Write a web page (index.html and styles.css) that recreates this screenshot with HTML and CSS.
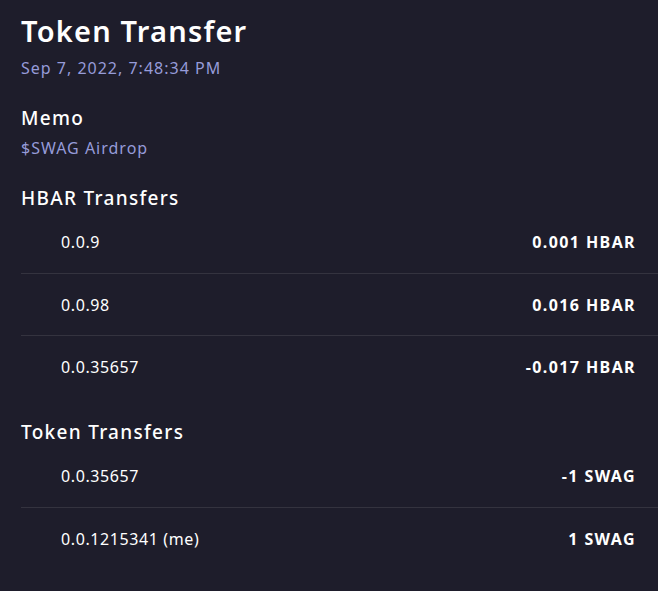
FILE: index.html
```html
<!DOCTYPE html>
<html>
<head>
<meta charset="utf-8">
<link rel="stylesheet" href="styles.css">
</head>
<body>
<main class="page">
  <header class="head">
    <h1 class="title">Token Transfer</h1>
    <div class="sub date">Sep 7, 2022, 7:48:34 PM</div>
  </header>
  <section class="memo">
    <h2 class="label">Memo</h2>
    <div class="sub">$SWAG Airdrop</div>
  </section>
  <section class="group">
    <h2 class="label">HBAR Transfers</h2>
    <ul class="rows">
      <li class="row"><span class="acct">0.0.9</span><span class="amt">0.001 HBAR</span></li>
      <li class="row"><span class="acct">0.0.98</span><span class="amt">0.016 HBAR</span></li>
      <li class="row"><span class="acct">0.0.35657</span><span class="amt">-0.017 HBAR</span></li>
    </ul>
  </section>
  <section class="group">
    <h2 class="label">Token Transfers</h2>
    <ul class="rows">
      <li class="row"><span class="acct">0.0.35657</span><span class="amt">-1 SWAG</span></li>
      <li class="row"><span class="acct">0.0.1215341 (me)</span><span class="amt">1 SWAG</span></li>
    </ul>
  </section>
</main>
</body>
</html>
```
FILE: styles.css
```css
html, body {
  margin: 0;
  padding: 0;
  background: #1e1d2b;
  height: 100%;
}
body {
  font-family: "Noto Sans", "Open Sans", sans-serif;
  color: #ffffff;
}
.page {
  padding: 12px 0 0 21px;
  display: flex;
  flex-direction: column;
}
.title {
  margin: 0;
  font-size: 29px;
  line-height: 38px;
  font-weight: 600;
  letter-spacing: 1.2px;
}
.sub {
  color: #969bd9;
  font-size: 16px;
  line-height: 22px;
  letter-spacing: 1px;
}
.date {
  margin-top: 7px;
}
.memo {
  margin-top: 28px;
}
.label {
  margin: 0;
  font-size: 19px;
  line-height: 22px;
  font-weight: 500;
  letter-spacing: 1.3px;
}
.memo .label {
  margin-bottom: 8px;
}
.group {
  margin-top: 28px;
}
.group + .group {
  margin-top: 24px;
}
.rows {
  list-style: none;
  margin: 2px 0 0;
  padding: 0;
}
.row {
  height: 62px;
  display: flex;
  align-items: center;
  justify-content: space-between;
  padding: 0 22px 0 40px;
  font-size: 16px;
  box-sizing: border-box;
}
.row + .row {
  border-top: 1px solid #34333f;
}
.acct {
  font-weight: 400;
  letter-spacing: 0.6px;
}
.amt {
  font-weight: 700;
  letter-spacing: 1.4px;
}
```
